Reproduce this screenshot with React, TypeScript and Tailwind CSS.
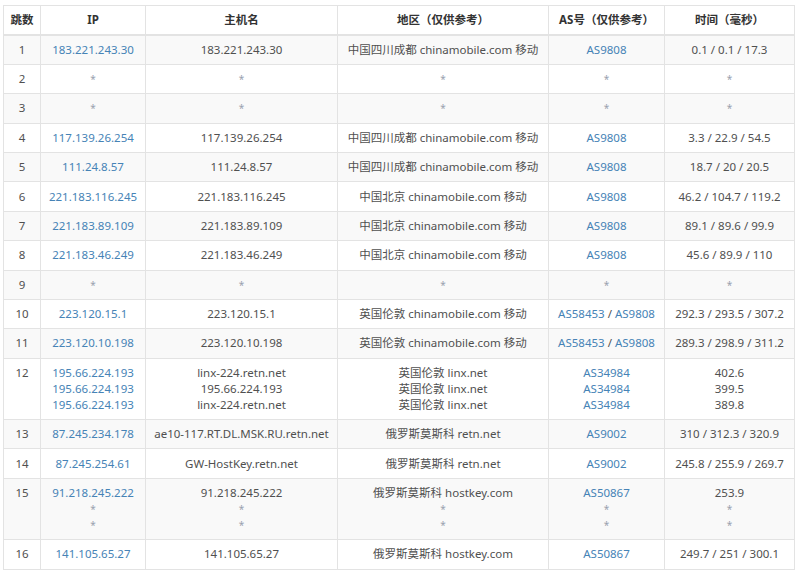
import React from "react";

type Hop = {
  n: number;
  ip: string[];
  host: string[];
  region: string[];
  as: string[][];
  time: string[];
};

const hops: Hop[] = [
  { n: 1, ip: ["183.221.243.30"], host: ["183.221.243.30"], region: ["中国四川成都 chinamobile.com 移动"], as: [["AS9808"]], time: ["0.1 / 0.1 / 17.3"] },
  { n: 2, ip: ["*"], host: ["*"], region: ["*"], as: [["*"]], time: ["*"] },
  { n: 3, ip: ["*"], host: ["*"], region: ["*"], as: [["*"]], time: ["*"] },
  { n: 4, ip: ["117.139.26.254"], host: ["117.139.26.254"], region: ["中国四川成都 chinamobile.com 移动"], as: [["AS9808"]], time: ["3.3 / 22.9 / 54.5"] },
  { n: 5, ip: ["111.24.8.57"], host: ["111.24.8.57"], region: ["中国四川成都 chinamobile.com 移动"], as: [["AS9808"]], time: ["18.7 / 20 / 20.5"] },
  { n: 6, ip: ["221.183.116.245"], host: ["221.183.116.245"], region: ["中国北京 chinamobile.com 移动"], as: [["AS9808"]], time: ["46.2 / 104.7 / 119.2"] },
  { n: 7, ip: ["221.183.89.109"], host: ["221.183.89.109"], region: ["中国北京 chinamobile.com 移动"], as: [["AS9808"]], time: ["89.1 / 89.6 / 99.9"] },
  { n: 8, ip: ["221.183.46.249"], host: ["221.183.46.249"], region: ["中国北京 chinamobile.com 移动"], as: [["AS9808"]], time: ["45.6 / 89.9 / 110"] },
  { n: 9, ip: ["*"], host: ["*"], region: ["*"], as: [["*"]], time: ["*"] },
  { n: 10, ip: ["223.120.15.1"], host: ["223.120.15.1"], region: ["英国伦敦 chinamobile.com 移动"], as: [["AS58453", "AS9808"]], time: ["292.3 / 293.5 / 307.2"] },
  { n: 11, ip: ["223.120.10.198"], host: ["223.120.10.198"], region: ["英国伦敦 chinamobile.com 移动"], as: [["AS58453", "AS9808"]], time: ["289.3 / 298.9 / 311.2"] },
  {
    n: 12,
    ip: ["195.66.224.193", "195.66.224.193", "195.66.224.193"],
    host: ["linx-224.retn.net", "195.66.224.193", "linx-224.retn.net"],
    region: ["英国伦敦 linx.net", "英国伦敦 linx.net", "英国伦敦 linx.net"],
    as: [["AS34984"], ["AS34984"], ["AS34984"]],
    time: ["402.6", "399.5", "389.8"],
  },
  { n: 13, ip: ["87.245.234.178"], host: ["ae10-117.RT.DL.MSK.RU.retn.net"], region: ["俄罗斯莫斯科 retn.net"], as: [["AS9002"]], time: ["310 / 312.3 / 320.9"] },
  { n: 14, ip: ["87.245.254.61"], host: ["GW-HostKey.retn.net"], region: ["俄罗斯莫斯科 retn.net"], as: [["AS9002"]], time: ["245.8 / 255.9 / 269.7"] },
  {
    n: 15,
    ip: ["91.218.245.222", "*", "*"],
    host: ["91.218.245.222", "*", "*"],
    region: ["俄罗斯莫斯科 hostkey.com", "*", "*"],
    as: [["AS50867"], ["*"], ["*"]],
    time: ["253.9", "*", "*"],
  },
  { n: 16, ip: ["141.105.65.27"], host: ["141.105.65.27"], region: ["俄罗斯莫斯科 hostkey.com"], as: [["AS50867"]], time: ["249.7 / 251 / 300.1"] },
];

function Star() {
  return <span className="text-[10px] text-gray-400">*</span>;
}

function Line({ text, link }: { text: string; link?: boolean }) {
  if (text === "*") return <div><Star /></div>;
  return <div className={link ? "text-[#4683b6]" : ""}>{text}</div>;
}

export default function App() {
  const cell = "border border-[#e3e3e3] px-1 py-[6.2px] text-center align-top";
  return (
    <div
      className="w-[800px] h-[573px] bg-white pt-[5px] pl-[3px] text-[11.5px] leading-[16px] text-[#505050]"
      style={{ fontFamily: '"Noto Sans", "Noto Sans CJK SC", sans-serif' }}
    >
      <table className="table-fixed border-collapse w-[791px]">
        <colgroup>
          <col className="w-[37px]" />
          <col className="w-[105px]" />
          <col className="w-[192px]" />
          <col className="w-[211px]" />
          <col className="w-[116px]" />
          <col className="w-[130px]" />
        </colgroup>
        <thead>
          <tr className="h-[29px]">
            {["跳数", "IP", "主机名", "地区（仅供参考）", "AS号（仅供参考）", "时间（毫秒）"].map((h) => (
              <th key={h} className="border border-[#e3e3e3] border-b-2 px-1 text-center font-bold text-[#333]">
                {h}
              </th>
            ))}
          </tr>
        </thead>
        <tbody>
          {hops.map((hop, i) => (
            <tr key={hop.n} className={i % 2 === 0 ? "bg-[#f9f9f9]" : "bg-white"}>
              <td className={cell}>{hop.n}</td>
              <td className={cell}>
                {hop.ip.map((t, k) => <Line key={k} text={t} link />)}
              </td>
              <td className={cell}>
                {hop.host.map((t, k) => <Line key={k} text={t} />)}
              </td>
              <td className={cell}>
                {hop.region.map((t, k) => <Line key={k} text={t} />)}
              </td>
              <td className={cell}>
                {hop.as.map((parts, k) =>
                  parts[0] === "*" ? (
                    <div key={k}><Star /></div>
                  ) : (
                    <div key={k}>
                      {parts.map((p, j) => (
                        <span key={j}>
                          {j > 0 && " / "}
                          <span className="text-[#4683b6]">{p}</span>
                        </span>
                      ))}
                    </div>
                  )
                )}
              </td>
              <td className={cell}>
                {hop.time.map((t, k) => <Line key={k} text={t} />)}
              </td>
            </tr>
          ))}
        </tbody>
      </table>
    </div>
  );
}
